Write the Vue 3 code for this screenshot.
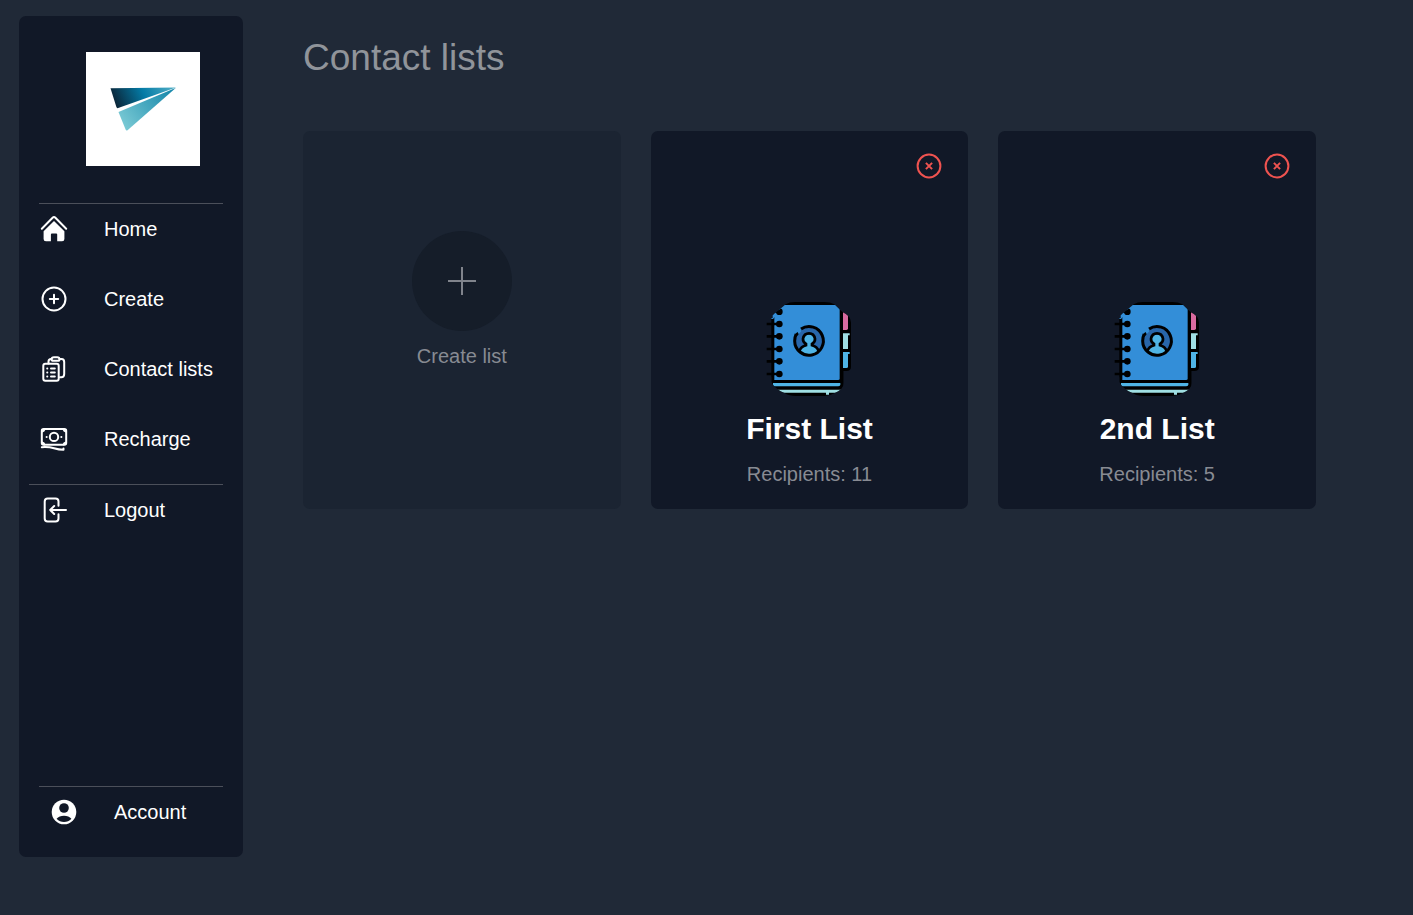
<script setup>
const links = ['Home', 'Create', 'Contact lists', 'Recharge']
const lists = [
  { name: 'First List', recipients: 11 },
  { name: '2nd List', recipients: 5 },
]
</script>

<template>
  <div class="app">
    <aside class="sidebar">
      <svg class="logo" viewBox="0 0 114 114" role="img" aria-label="Paper plane">
        <defs>
          <linearGradient id="wing-top" gradientUnits="userSpaceOnUse" x1="27" y1="50" x2="84" y2="24">
            <stop offset="0" stop-color="#0b2234" />
            <stop offset="0.5" stop-color="#047ba6" />
            <stop offset="1" stop-color="#53b0c7" />
          </linearGradient>
          <linearGradient id="wing-bottom" gradientUnits="userSpaceOnUse" x1="36" y1="72" x2="84" y2="36">
            <stop offset="0" stop-color="#79c9d4" />
            <stop offset="1" stop-color="#1788ab" />
          </linearGradient>
        </defs>
        <rect width="114" height="114" fill="#fff" />
        <path d="M24.5 36.2 90 35.6 31.5 56.2Q30.7 56 30.3 54.8Z" fill="url(#wing-top)" />
        <path d="M32.5 60 90 35.8 41.5 78.2Q40.3 79 39.6 77.6Z" fill="url(#wing-bottom)" />
      </svg>

      <nav class="nav">
        <ul class="links">
          <li v-for="link in links" :key="link">
            <a class="row" href="#">
              <svg v-if="link === 'Home'" class="icon" viewBox="0 0 30 30">
                <path d="M2.8 14.7 13.6 3.8Q15 2.4 16.4 3.8L27.2 14.7" fill="none" stroke="#fff" stroke-width="2" stroke-linecap="round" stroke-linejoin="round" />
                <path d="M15 6.9 25.4 17.2V25Q25.4 27.3 23.1 27.3H18.2V20.5Q18.2 19.5 17.2 19.5H12.9Q11.9 19.5 11.9 20.5V27.3H6.9Q4.6 27.3 4.6 25V17.2Z" fill="#fff" />
              </svg>
              <svg v-else-if="link === 'Create'" class="icon line" viewBox="0 0 30 30">
                <circle cx="15" cy="15" r="11.5" />
                <path d="M15 10.8V19.2M10.8 15H19.2" />
              </svg>
              <svg v-else-if="link === 'Contact lists'" class="icon line" viewBox="0 0 30 30">
                <path d="M9.5 9.5V7.6Q9.5 5 12.1 5H12.5M20.5 5H22.5Q25.2 5 25.2 8V20Q25.2 23.2 22.3 23.2H21" />
                <path d="M14.2 6.8Q12.6 6.8 12.6 5.2Q12.6 3.2 15 3.2H18.2Q20.5 3.2 20.5 5.2Q20.5 6.8 19 6.8Z" />
                <rect x="4.3" y="9.8" width="15.4" height="17" rx="2" />
                <path d="M12 14.6H15.8M12 18.6H15.8M12 22.6H15.8M8.2 14.6H8.3M8.2 18.6H8.3M8.2 22.6H8.3" />
              </svg>
              <svg v-else class="icon line" viewBox="0 0 30 30">
                <rect x="2.8" y="5" width="24.4" height="15.8" rx="1.8" />
                <circle cx="15" cy="12.9" r="4.2" />
                <path d="M7.6 12.9H7.7M22.3 12.9H22.4M3.2 7.4Q5 7 5.4 5.4M24.6 5.4Q25 7 26.8 7.4M3.2 18.4Q5 18.8 5.4 20.4M24.6 20.4Q25 18.8 26.8 18.4" />
                <path d="M2.8 23.2Q10 22.8 15 24.2T24.5 25.8V24.5" />
              </svg>
              <span>{{ link }}</span>
            </a>
          </li>
        </ul>
        <a class="row logout" href="#">
          <svg class="icon line" viewBox="0 0 30 30">
            <path d="M19.5 10.8V6.5Q19.5 3.5 16.5 3.5H8.7Q5.7 3.5 5.7 6.5V23.5Q5.7 26.5 8.7 26.5H16.5Q19.5 26.5 19.5 23.5V19.2M27 15H11.2M15.2 11 11.2 15 15.2 19" />
          </svg>
          <span>Logout</span>
        </a>
      </nav>

      <a class="row account" href="#">
        <svg class="icon" viewBox="0 0 30 30">
          <circle cx="15" cy="15" r="12.3" fill="#fff" />
          <circle cx="15" cy="11" r="4.8" fill="#111827" />
          <path d="M7.6 21.8Q10.2 18.7 15 18.7T22.4 21.8Q19.3 25.1 15 25.1T7.6 21.8Z" fill="#111827" />
        </svg>
        <span>Account</span>
      </a>
    </aside>

    <main class="main">
      <h1>Contact lists</h1>
      <div class="cards">
        <button class="card create" type="button">
          <span class="plus">
            <svg viewBox="0 0 28 28"><path d="M14 0V28M0 14H28" stroke="#80848c" stroke-width="2" /></svg>
          </span>
          <span>Create list</span>
        </button>

        <article v-for="list in lists" :key="list.name" class="card list">
          <button class="remove" type="button" :aria-label="'Remove ' + list.name">
            <svg viewBox="0 0 26 26" fill="none" stroke="#ef5350" stroke-width="2">
              <circle cx="13" cy="13" r="11.4" />
              <path d="M9.9 9.9 16.1 16.1M16.1 9.9 9.9 16.1" />
            </svg>
          </button>
          <svg class="book" viewBox="33 30 261 291" aria-hidden="true">
            <defs>
              <clipPath id="book-shape">
                <path d="M33 88 53 84V76L92 43Q103 36 120 36H208Q226 36 238 43L262 66Q288 78 288 98V230Q288 243 274 243H266V280Q266 298 238 310Q224 318 208 318H122Q102 318 90 310Q60 298 49 276V262H33Z" />
              </clipPath>
            </defs>
            <g clip-path="url(#book-shape)">
              <rect x="49" y="36" width="217" height="282" fill="#000" />
              <path d="M260 60H288V243H260Z" fill="#000" />
              <path d="M264 60H279V115Q279 120 274 120H264Z" fill="#d96a9f" />
              <path d="M264 130H284V136H279V177H264Z" fill="#9fdee2" />
              <path d="M264 186H284V192H279V230Q279 234 274 234H264Z" fill="#4fb4e5" />
              <path d="M58 45H254V266Q254 270 249 270H58Z" fill="#338ed8" />
              <path d="M54 279H256V284Q255 289 249 289H54Z" fill="#4fb4e5" />
              <path d="M54 299H265V308H222V314H213V308H54Z" fill="#9fdee2" />
              <path d="M49 70 60 60V80L54 87H49Z" fill="#338ed8" />
              <g stroke="#000" stroke-width="8">
                <path d="M60 65H74M35 102H74M35 139H74M35 177H74M35 214H74M35 252H74" />
              </g>
              <g fill="#000">
                <circle cx="73" cy="65" r="10" />
                <circle cx="73" cy="102" r="10" />
                <circle cx="73" cy="139" r="10" />
                <circle cx="73" cy="177" r="10" />
                <circle cx="73" cy="214" r="10" />
                <circle cx="73" cy="252" r="10" />
              </g>
            </g>
            <circle cx="162" cy="153" r="40" fill="#2866aa" />
            <path d="M134 184Q140 170 155 167L152 160Q145 154 147 145Q150 134 162 134T177 145Q179 154 172 160L169 167Q184 170 190 184Q178 196 162 196T134 184Z" fill="#4fb4e5" />
            <path d="M133 183Q138 170 153 166V162Q143 156 144 146Q147 130 162 130T180 146Q181 156 171 162V166Q186 170 191 183" fill="none" stroke="#000" stroke-width="8" />
            <path d="M124 131Q119 141 119 153A43 43 0 1 0 138 117" fill="none" stroke="#000" stroke-width="9" />
            <path d="M119 131 131 116 139 124 129 134Z" fill="#338ed8" />
            <path d="M119 133 128 126 131 133 124 141Z" fill="#000" />
          </svg>
          <h2>{{ list.name }}</h2>
          <p>Recipients: {{ list.recipients }}</p>
        </article>
      </div>
    </main>
  </div>
</template>

<style>
body {
  margin: 0;
  background: #202937;
}
</style>

<style scoped>
.app {
  box-sizing: border-box;
  display: flex;
  gap: 60px;
  min-height: 100vh;
  padding: 16px 97px 58px 19px;
  font-family: "Liberation Sans", Arial, sans-serif;
  font-size: 20px;
  line-height: 24px;
  color: #fff;
}
.sidebar {
  box-sizing: border-box;
  display: flex;
  flex-direction: column;
  flex: 0 0 224px;
  padding: 36px 20px 20px;
  border-radius: 7px;
  background: #111827;
}
.logo {
  display: block;
  width: 114px;
  height: 114px;
  margin: 0 0 37px 47px;
}
.nav {
  flex: 1;
}
.links {
  display: grid;
  gap: 20px;
  margin: 0 0 20px;
  padding: 0;
  border-top: 1px solid #4b4f5a;
  list-style: none;
}
.row {
  display: flex;
  align-items: center;
  gap: 35px;
  height: 50px;
  color: #fff;
  text-decoration: none;
  white-space: nowrap;
}
.icon {
  flex: none;
  width: 30px;
  height: 30px;
}
.line {
  fill: none;
  stroke: #fff;
  stroke-width: 2;
  stroke-linecap: round;
  stroke-linejoin: round;
}
.logout {
  margin-left: -10px;
  padding-left: 10px;
  border-top: 1px solid #4b4f5a;
}
.account {
  padding-left: 10px;
  border-top: 1px solid #4b4f5a;
}
.main {
  flex: 1;
  min-width: 0;
}
h1 {
  margin: 20px 0 51px;
  font-size: 37px;
  font-weight: 400;
  line-height: 44px;
  color: #90949a;
}
.cards {
  display: grid;
  grid-template-columns: repeat(3, 1fr);
  gap: 30px;
}
.card {
  box-sizing: border-box;
  display: flex;
  flex-direction: column;
  align-items: center;
  min-height: 378px;
  border: 0;
  border-radius: 7px;
  background: #111827;
}
.create {
  justify-content: flex-start;
  gap: 13px;
  padding: 100px 20px 20px;
  background: #1b2432;
  font: inherit;
  color: #878b92;
}
.plus {
  display: grid;
  place-items: center;
  width: 100px;
  height: 100px;
  border-radius: 50%;
  background: #151d29;
}
.plus svg {
  width: 28px;
  height: 28px;
}
.list {
  padding: 22px 26px 23px;
}
.remove {
  align-self: flex-end;
  width: 26px;
  height: 26px;
  padding: 0;
  border: 0;
  background: none;
}
.remove svg {
  display: block;
}
.book {
  width: 87px;
  height: 97px;
  margin-top: auto;
}
h2 {
  margin: 15px 0 16px;
  font-size: 30px;
  line-height: 34px;
}
p {
  margin: 0;
  color: #888b93;
}
</style>
